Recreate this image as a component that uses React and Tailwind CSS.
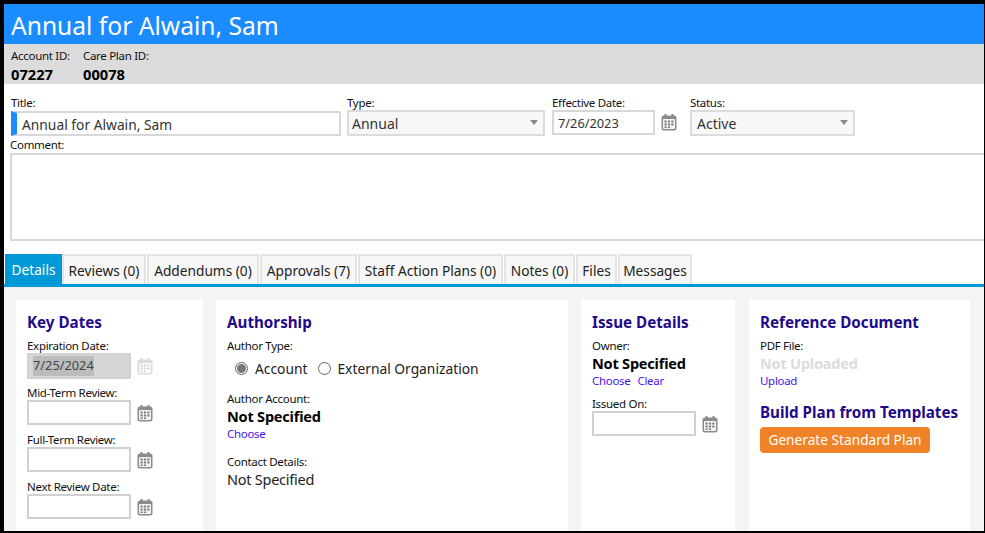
import React from 'react';

const CalendarIcon = ({ faded, className = '' }) => (
    <svg width="16" height="17" viewBox="0 0 16 17" className={`shrink-0 ${faded ? 'opacity-30' : ''} ${className}`}>
        <rect x="0.5" y="1.5" width="15" height="15" rx="2.5" fill="#8b8b8b" />
        <rect x="2" y="5" width="12" height="10" rx="1" fill="#f4f4f4" />
        <rect x="3.5" y="0" width="2" height="3" fill="#8b8b8b" />
        <rect x="10.5" y="0" width="2" height="3" fill="#8b8b8b" />
        <g fill="#7d7d7d">
            <rect x="3.5" y="6.5" width="2.2" height="2" />
            <rect x="6.9" y="6.5" width="2.2" height="2" />
            <rect x="10.3" y="6.5" width="2.2" height="2" />
            <rect x="3.5" y="9.5" width="2.2" height="2" />
            <rect x="6.9" y="9.5" width="2.2" height="2" />
            <rect x="10.3" y="9.5" width="2.2" height="2" />
            <rect x="3.5" y="12.5" width="2.2" height="1.5" />
            <rect x="6.9" y="12.5" width="2.2" height="1.5" />
        </g>
    </svg>
);

const Caret = () => (
    <span className="ml-auto mr-[5px] mb-[2px] w-0 h-0 border-x-[4px] border-x-transparent border-t-[5px] border-t-[#8a8a8a]" />
);

const Label = ({ children, className = '' }) => (
    <div className={`text-[11.5px] tracking-[-0.3px] leading-[14px] text-[#111] ${className}`}>{children}</div>
);

const DateField = ({ label, value, disabled }) => (
    <div className="mb-[8px]">
        <Label>{label}</Label>
        <div className="flex items-center gap-[6px] h-[25px]">
            <div className={`w-[104px] border-2 flex items-center pl-[4px] pt-[1px] text-[12.8px] ${disabled ? 'h-[26px] bg-[#d6d6d6] border-[#d2d2d2] text-[#444]' : 'h-[25px] bg-white border-[#d0d0d0] text-[#222]'}`}>
                {value && <span className={disabled ? 'bg-[#bcbcbc]' : ''}>{value}</span>}
            </div>
            <CalendarIcon faded={disabled} className="mt-[2px]" />
        </div>
    </div>
);

const Heading = ({ children, className = '' }) => (
    <h3 className={`text-[15.2px] leading-[20px] font-bold text-[#1f0a8a] ${className}`}>{children}</h3>
);

const Strong = ({ children }) => (
    <div className="text-[14.5px] tracking-[-0.2px] leading-[20px] font-bold text-black">{children}</div>
);

const LinkText = ({ children }) => (
    <span className="text-[11.5px] tracking-[-0.3px] leading-[16px] text-[#4a12f0]">{children}</span>
);

const tabs = [
    { name: 'Reviews (0)', width: 'w-[84px]' },
    { name: 'Addendums (0)', width: 'w-[112px]' },
    { name: 'Approvals (7)', width: 'w-[97px]' },
    { name: 'Staff Action Plans (0)', width: 'w-[145px]' },
    { name: 'Notes (0)', width: 'w-[71px]' },
    { name: 'Files', width: 'w-[41px]' },
    { name: 'Messages', width: 'w-[74px]' },
];

export default function App() {
    return (
        <div className="w-[985px] h-[533px] bg-black pt-[4px] pl-[4px] pr-[1px] pb-[2px] overflow-hidden" style={{ fontFamily: '"Noto Sans", sans-serif' }}>
            <div className="h-full bg-white flex flex-col overflow-hidden">
                <div className="h-[40px] bg-[#1a8cff] text-white text-[24.6px] leading-[40px] pl-[7px] pt-[2px] shrink-0">Annual for Alwain, Sam</div>

                <div className="h-[40px] bg-[#dcdcdc] pl-[7px] pt-[5px] flex shrink-0">
                    <div className="w-[72px]">
                        <Label>Account ID:</Label>
                        <div className="text-[14.7px] leading-[20px] font-bold text-black mt-[1px]">07227</div>
                    </div>
                    <div>
                        <Label>Care Plan ID:</Label>
                        <div className="text-[14.7px] leading-[20px] font-bold text-black mt-[1px]">00078</div>
                    </div>
                </div>

                <div className="flex pl-[7px] pt-[12px] shrink-0">
                    <div className="w-[330px] mr-[6px]">
                        <Label>Title:</Label>
                        <div className="h-[25px] mt-[1px] border-2 border-[#d8d8d8] border-l-[6px] border-l-[#1a8cff] flex items-center pl-[5px] pt-[3px] text-[13.8px] text-[#333]">Annual for Alwain, Sam</div>
                    </div>
                    <div className="w-[198px] mr-[7px]">
                        <Label>Type:</Label>
                        <div className="h-[26px] border-2 border-[#dcdcdc] bg-[#f8f8f8] flex items-center pl-[3px] text-[14px] text-[#333]">Annual<Caret /></div>
                    </div>
                    <div className="mr-[13px]">
                        <Label>Effective Date:</Label>
                        <div className="flex items-center gap-[6px]">
                            <div className="w-[103px] h-[25px] border-2 border-[#d8d8d8] flex items-center pl-[4px] pt-[3px] text-[12.8px] text-[#333]">7/26/2023</div>
                            <CalendarIcon />
                        </div>
                    </div>
                    <div className="w-[165px]">
                        <Label>Status:</Label>
                        <div className="h-[26px] border-2 border-[#dcdcdc] bg-[#f8f8f8] flex items-center pl-[5px] text-[14px] text-[#333]">Active<Caret /></div>
                    </div>
                </div>

                <div className="pl-[6px] pt-[2px] shrink-0">
                    <Label>Comment:</Label>
                    <div className="h-[88px] border-2 border-r-0 border-[#d8d8d8] mt-[1px]" />
                </div>

                <div className="flex pl-[1px] mt-[13px] h-[33px] border-b-[3px] border-[#0099d5] shrink-0">
                    <div className="w-[57px] text-center bg-[#0099d5] text-white text-[13.7px] leading-[31px]">Details</div>
                    {tabs.map((tab) => (
                        <div key={tab.name} className={`${tab.width} mr-[1px] text-center whitespace-nowrap bg-[#f7f7f7] border-2 border-b-0 border-[#e4e4e4] text-[13.7px] leading-[29px] text-[#222]`}>{tab.name}</div>
                    ))}
                </div>

                <div className="flex-1 bg-[#f4f4f4] pt-[13px] pl-[12px] flex min-h-0">
                    <div className="w-[187px] mr-[13px] bg-white pl-[11px] pt-[12px]">
                        <Heading className="mb-[7px]">Key Dates</Heading>
                        <DateField label="Expiration Date:" value="7/25/2024" disabled />
                        <DateField label="Mid-Term Review:" />
                        <DateField label="Full-Term Review:" />
                        <DateField label="Next Review Date:" />
                    </div>

                    <div className="w-[352px] mr-[13px] bg-white pl-[11px] pt-[12px]">
                        <Heading className="mb-[7px]">Authorship</Heading>
                        <Label>Author Type:</Label>
                        <div className="flex items-center h-[24px] mt-[3px] pl-[8px] text-[13.8px] text-[#222]">
                            <span className="w-[13px] h-[13px] rounded-full border border-[#666] flex items-center justify-center mr-[7px]">
                                <span className="w-[9px] h-[9px] rounded-full bg-[#777]" />
                            </span>
                            <span className="mt-[2px]">Account</span>
                            <span className="w-[13px] h-[13px] rounded-full border border-[#666] ml-[11px] mr-[6px]" />
                            <span className="mt-[2px]">External Organization</span>
                        </div>
                        <Label className="mt-[12px]">Author Account:</Label>
                        <Strong>Not Specified</Strong>
                        <div className="flex"><LinkText>Choose</LinkText></div>
                        <Label className="mt-[13px]">Contact Details:</Label>
                        <div className="text-[14.5px] tracking-[-0.25px] leading-[20px] text-[#222]">Not Specified</div>
                    </div>

                    <div className="w-[154px] mr-[14px] bg-white pl-[11px] pt-[12px]">
                        <Heading className="mb-[7px]">Issue Details</Heading>
                        <Label>Owner:</Label>
                        <Strong>Not Specified</Strong>
                        <div className="flex gap-[7px] mb-[8px]"><LinkText>Choose</LinkText><LinkText>Clear</LinkText></div>
                        <DateField label="Issued On:" />
                    </div>

                    <div className="w-[221px] bg-white pl-[11px] pt-[12px]">
                        <Heading className="mb-[7px]">Reference Document</Heading>
                        <Label>PDF File:</Label>
                        <div className="text-[14.5px] tracking-[-0.2px] leading-[20px] font-bold text-[#dcdcdc]">Not Uploaded</div>
                        <div className="flex"><LinkText>Upload</LinkText></div>
                        <Heading className="mt-[13px] mb-[5px]">Build Plan from Templates</Heading>
                        <button className="w-[170px] h-[26px] rounded-[4px] bg-[#f08227] text-white text-[13.7px] leading-[26px]">Generate Standard Plan</button>
                    </div>
                </div>
            </div>
        </div>
    );
}
